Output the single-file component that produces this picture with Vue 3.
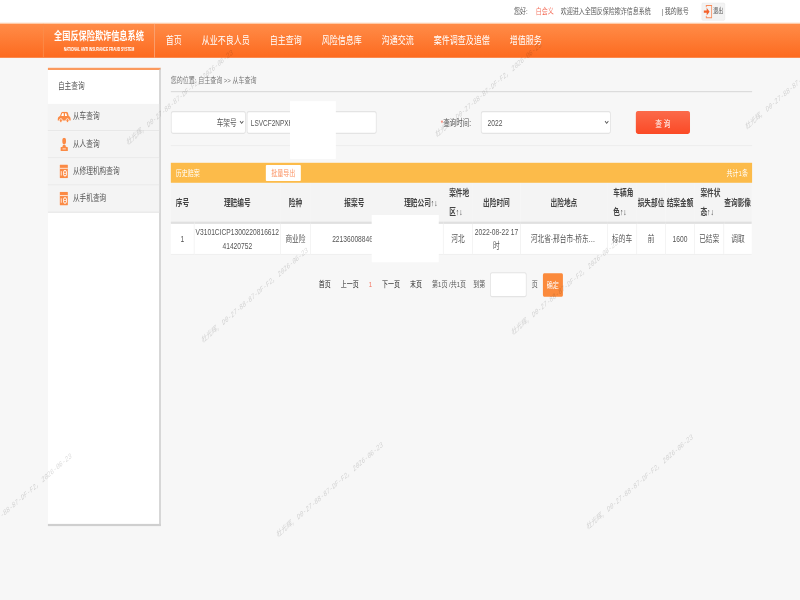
<script setup>
const navItems = ['首页', '从业不良人员', '自主查询', '风险信息库', '沟通交流', '案件调查及追偿', '增值服务']

const sideItems = [
  { label: '从车查询', icon: 'car' },
  { label: '从人查询', icon: 'person' },
  { label: '从修理机构查询', icon: 'doc' },
  { label: '从手机查询', icon: 'doc' },
]

const columns = [
  { w: 56, lines: ['序号'] },
  { w: 207, lines: ['理赔编号'] },
  { w: 72, lines: ['险种'] },
  { w: 211, lines: ['报案号'] },
  { w: 108, lines: ['理赔公司↑↓'] },
  { w: 70, lines: ['案件地', '区↑↓'], left: true },
  { w: 115, lines: ['出险时间'] },
  { w: 209, lines: ['出险地点'] },
  { w: 70, lines: ['车辆角', '色↑↓'], left: true },
  { w: 69, lines: ['损失部位'] },
  { w: 70, lines: ['结案金额'] },
  { w: 70, lines: ['案件状', '态↑↓'], left: true },
  { w: 67, lines: ['查询影像'] },
]

const row = [
  '1',
  'V3101CICP130022081661241420752',
  '商业险',
  '221360088460',
  '',
  '河北',
  '2022-08-22 17时',
  '河北省-邢台市-桥东区中兴大街',
  '标的车',
  '前',
  '1600',
  '已结案',
  '调取',
]

const watermarks = [
  [308, 250], [1049, 236], [1793, 222],
  [-259, 622], [488, 606], [1232, 592],
  [-79, 976], [668, 956], [1412, 942],
].map(([x, y]) => ({ left: x + 'px', top: y + 'px' }))
</script>

<template>
  <div class="frame">
    <div class="page">
      <header class="topbar">
        <span>您好:</span>
        <span class="user">白会义</span>
        <span class="welcome">欢迎进入全国反保险欺诈信息系统</span>
        <span class="account">| 我的账号</span>
        <span class="exit">
          <svg width="22" height="26" viewBox="0 0 22 26">
            <path d="M7 5V2h13v22H7v-3" fill="none" stroke="#f98a58" stroke-width="2" />
            <path d="M1 11h7V6l7 7-7 7v-5H1z" fill="#f4622c" />
          </svg>
          退出
        </span>
      </header>

      <nav class="nav">
        <div class="logo">
          <div class="logo-title">全国反保险欺诈信息系统</div>
          <div class="logo-sub">NATIONAL ANTI INSURANCE FRAUD SYSTEM</div>
        </div>
        <ul class="nav-list">
          <li v-for="item in navItems" :key="item">{{ item }}</li>
        </ul>
      </nav>

      <div class="content">
        <aside class="sidebar">
          <div class="side-title">自主查询</div>
          <div v-for="item in sideItems" :key="item.label" class="side-item">
            <span class="side-icon">
              <svg v-if="item.icon === 'car'" width="32" height="20" viewBox="0 0 32 20">
                <path d="M0 15c0-4 3-6 6-7l3-6c1-1 2-2 4-2h8c2 0 3 1 4 2l2 6c3 1 5 3 5 7v1H0z" fill="#fb8a45" />
                <path d="M11 3h4v5H9zM18 3h3l2 5h-5z" fill="#fff" />
                <circle cx="8" cy="16" r="3.5" fill="#fb8a45" stroke="#fff" stroke-width="1.5" />
                <circle cx="24" cy="16" r="3.5" fill="#fb8a45" stroke="#fff" stroke-width="1.5" />
              </svg>
              <svg v-else-if="item.icon === 'person'" width="18" height="24" viewBox="0 0 18 24">
                <ellipse cx="9" cy="6" rx="4.5" ry="6" fill="#fb8a45" />
                <path d="M6 13h6l1 3 5 1v7H0v-7l5-1z" fill="#fb8a45" />
                <path d="M5 20h8" stroke="#fff" stroke-width="1.5" />
              </svg>
              <svg v-else width="20" height="25" viewBox="0 0 20 25">
                <rect width="20" height="25" rx="1.5" fill="#fb8a45" />
                <path d="M0 7h20" stroke="#fff" stroke-width="1.6" />
                <ellipse cx="13" cy="16" rx="3.6" ry="5" fill="none" stroke="#fff" stroke-width="1.8" />
                <path d="M10 16h6M4 12v8" stroke="#fff" stroke-width="1.6" />
              </svg>
            </span>
            <span>{{ item.label }}</span>
          </div>
        </aside>

        <main class="main">
          <div class="crumb">您的位置: 自主查询 &gt;&gt; 从车查询</div>

          <div class="search">
            <select class="field type-select">
              <option>车架号</option>
            </select>
            <input class="field vin" value="LSVCF2NPXH" />
            <label class="time-label"><i>*</i>查询时间:</label>
            <select class="field year-select">
              <option>2022</option>
            </select>
            <button class="query">查 询</button>
          </div>

          <div class="bar">
            <span>历史赔案</span>
            <span class="export">批量导出</span>
            <span class="total">共计1条</span>
          </div>

          <table class="grid">
            <colgroup>
              <col v-for="(c, i) in columns" :key="i" :style="{ width: c.w + 'px' }" />
            </colgroup>
            <thead>
              <tr>
                <th v-for="(c, i) in columns" :key="i" :class="{ left: c.left }">
                  <div v-for="line in c.lines" :key="line">{{ line }}</div>
                </th>
              </tr>
            </thead>
            <tbody>
              <tr>
                <td v-for="(cell, i) in row" :key="i" :class="{ clip: i === 7, solid: i === 3 }">{{ cell }}</td>
              </tr>
            </tbody>
          </table>

          <div class="pager">
            <a>首页</a>
            <a>上一页</a>
            <em>1</em>
            <a>下一页</a>
            <a>末页</a>
            <span>第1页 /共1页</span>
            <span class="goto">到第</span>
            <input class="page-input" />
            <span class="unit">页</span>
            <button class="confirm">确定</button>
          </div>

          <div class="cover cover-a"></div>
          <div class="cover cover-b"></div>
        </main>
      </div>

      <div v-for="(w, i) in watermarks" :key="i" class="mark" :style="w">杜光辉, D0-27-88-87-DF-F2, 2026-06-23</div>
    </div>
  </div>
</template>

<style scoped>
.frame {
  width: 800px;
  height: 600px;
  overflow: hidden;
}
.page {
  position: relative;
  width: 1920px;
  height: 1080px;
  overflow: hidden;
  background: #f7f7f7;
  color: #555;
  font: 16px/1.4 "Liberation Sans", "Noto Sans CJK SC", sans-serif;
  transform: scale(0.41667, 0.55556);
  transform-origin: 0 0;
  filter: blur(0.55px);
}

.topbar {
  height: 41px;
  padding-right: 180px;
  display: flex;
  justify-content: flex-end;
  align-items: center;
  background: #fff;
  font-size: 14.4px;
}
.user { margin-left: 19px; color: #f4725e; }
.welcome { margin-left: 17px; }
.account { margin-left: 26px; }
.exit {
  margin-left: 31px;
  width: 56px;
  height: 32px;
  box-sizing: border-box;
  display: flex;
  align-items: center;
  justify-content: center;
  gap: 2px;
  background: #f3f3f3;
  border: 1px solid #e6e6e6;
  border-radius: 3px;
  font-size: 12px;
}

.nav {
  height: 63px;
  display: flex;
  padding-left: 103px;
  box-sizing: border-box;
  background: linear-gradient(#ff8c48, #fd6a1f);
  border-top: 2px solid #ffc9a3;
  color: #fff;
}
.logo {
  width: 269px;
  box-sizing: border-box;
  border-left: 2px solid #fa8d4c;
  border-right: 2px solid #f9a577;
  text-align: center;
  padding-top: 10px;
}
.logo-title {
  font: bold 19.6px/26px "Liberation Serif", "Noto Sans CJK SC", serif;
  white-space: nowrap;
}
.logo-sub {
  margin-top: 6px;
  font: bold 8px/10px "Liberation Sans", sans-serif;
  letter-spacing: -0.2px;
  white-space: nowrap;
  transform: scaleY(1.3);
}
.nav-list {
  display: flex;
  align-items: center;
  margin: 0 0 0 2px;
  padding: 0;
  list-style: none;
  font-size: 19.2px;
}
.nav-list li { padding: 0 24px; white-space: nowrap; }

.content {
  display: flex;
  gap: 24px;
  padding: 18px 0 0 115px;
}

.sidebar {
  width: 271px;
  height: 825px;
  box-sizing: border-box;
  background: #fff;
  border-top: 4px solid #fb9a5e;
  border-right: 4px solid #cfcfcf;
  border-bottom: 4px solid #cfcfcf;
}
.side-title {
  height: 61px;
  padding-left: 24px;
  display: flex;
  align-items: center;
  font-size: 16px;
}
.side-item {
  height: 49px;
  box-sizing: border-box;
  display: flex;
  align-items: center;
  background: #f4f4f4;
  border-bottom: 2px solid #e8e8e8;
  font-size: 16px;
  white-space: nowrap;
}
.side-icon {
  width: 60px;
  flex: none;
  display: flex;
  justify-content: flex-end;
  padding-right: 5px;
  box-sizing: border-box;
  line-height: 0;
}
.side-item:nth-child(n+3) .side-icon { padding-right: 12px; }

.main {
  position: relative;
  width: 1395px;
}
.crumb {
  height: 44px;
  box-sizing: border-box;
  display: flex;
  align-items: center;
  border-bottom: 2px solid #d9d9d9;
  padding-top: 2px;
  font-size: 14.4px;
  color: #777;
}

.search {
  display: flex;
  align-items: center;
  margin-top: 34px;
  padding-bottom: 20px;
  border-bottom: 2px solid #eee;
}
.field {
  height: 41px;
  box-sizing: border-box;
  background: #fff;
  border: 2px solid #e4e4e4;
  border-radius: 5px;
  color: #555;
  font: 16px "Liberation Sans", "Noto Sans CJK SC", sans-serif;
  outline: none;
}
.type-select { width: 180px; text-align: right; text-align-last: right; padding-right: 4px; }
.vin { width: 312px; margin-left: 2px; padding: 0 8px; font-size: 15.5px; }
.time-label { margin-left: 154px; width: 79px; white-space: nowrap; font-size: 15.5px; }
.time-label i { color: #f4725e; font-style: normal; }
.year-select { width: 312px; margin-left: 17px; padding-left: 10px; }
.query {
  width: 130px;
  height: 41px;
  margin-left: 60px;
  background: linear-gradient(#fb6a4a, #fb4a26);
  border: 0;
  border-radius: 5px;
  color: #fff;
  font: 16px "Liberation Sans", "Noto Sans CJK SC", sans-serif;
}

.bar {
  height: 36px;
  margin-top: 30px;
  padding: 0 10px 0 12px;
  display: flex;
  align-items: center;
  background: #fcbb4a;
  color: #fff;
  font-size: 14.4px;
}
.export {
  margin-left: 158px;
  width: 84px;
  height: 29px;
  display: flex;
  align-items: center;
  justify-content: center;
  background: #fff;
  border-radius: 2px;
  color: #fb9160;
}
.total { margin-left: auto; }

.grid {
  width: 1394px;
  table-layout: fixed;
  border-collapse: collapse;
}
.grid th {
  height: 70px;
  padding: 0;
  background: #f4f4f4;
  border-bottom: 4px solid #e0e0e0;
  color: #444;
  font-size: 16px;
  line-height: 35px;
  white-space: nowrap;
  overflow: hidden;
}
.grid th.left { padding-left: 14px; text-align: left; }
.grid td {
  height: 54px;
  padding: 0;
  background: #fff;
  border-left: 2px solid #f2f2f2;
  border-bottom: 2px solid #f0f0f0;
  font-size: 16px;
  line-height: 25px;
  text-align: center;
  word-break: break-all;
}
.grid td:first-child { border-left: 0; }
.grid td.clip {
  padding: 0 24px;
  white-space: nowrap;
  overflow: hidden;
  text-overflow: ellipsis;
}
.grid td.solid { white-space: nowrap; }

.pager {
  display: flex;
  align-items: center;
  gap: 24px;
  margin-top: 31px;
  padding-left: 355px;
  font-size: 14.4px;
  white-space: nowrap;
}
.pager a { color: #222; }
.pager em { color: #f4725e; font-style: normal; }
.goto { margin-left: -7px; }
.page-input {
  width: 88px;
  height: 45px;
  margin-left: -12px;
  box-sizing: border-box;
  background: #fff;
  border: 2px solid #e4e4e4;
  border-radius: 5px;
  outline: none;
}
.unit { margin-left: -12px; }
.confirm {
  width: 48px;
  height: 42px;
  margin-left: -12px;
  padding: 0;
  background: #fb8a3c;
  border: 0;
  border-radius: 3px;
  color: #fff;
  font: 14.4px "Liberation Sans", "Noto Sans CJK SC", sans-serif;
}

.cover { position: absolute; background: #fff; }
.cover-a { left: 286px; top: 60px; width: 110px; height: 104px; }
.cover-b { left: 482px; top: 265px; width: 161px; height: 85px; }

.mark {
  position: absolute;
  transform: rotate(-33deg);
  transform-origin: 0 100%;
  color: rgba(0, 0, 0, 0.16);
  font: italic 14px/1 "Liberation Mono", "Noto Sans CJK SC", monospace;
  white-space: nowrap;
  pointer-events: none;
}
</style>

<style>
html, body { margin: 0; overflow: hidden; background: #f7f7f7; }
</style>
